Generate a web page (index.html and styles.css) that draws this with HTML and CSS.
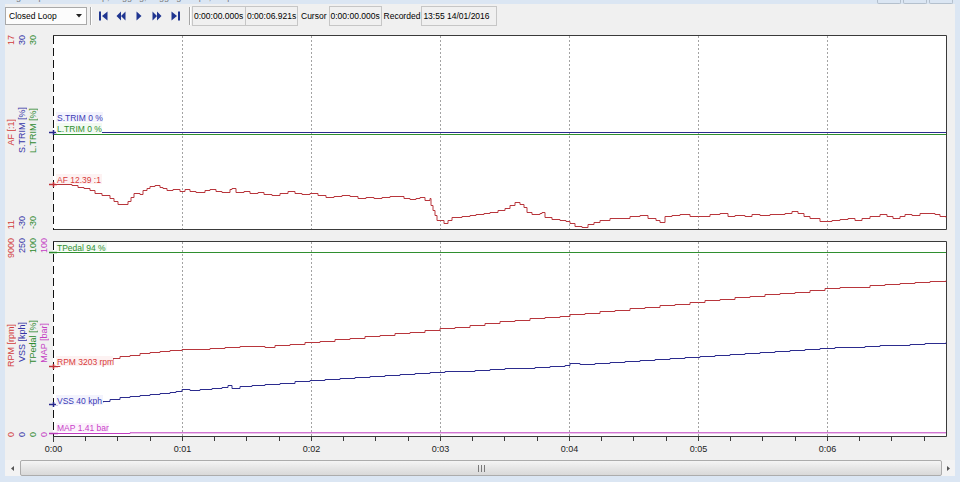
FILE: index.html
```html
<!DOCTYPE html>
<html>
<head>
<meta charset="utf-8">
<link rel="stylesheet" href="styles.css">
</head>
<body>
<div class="title">
  <span class="title-text">Log Graph - Closed Loop, Logging, Logging Graph, Help</span>
  <div class="winbtns"><span class="winbtn"></span><span class="winbtn"></span><span class="winbtn"></span></div>
</div>
<div class="app">
  <div class="toolbar">
    <div class="combo"><span>Closed Loop</span><svg class="combo-arrow" width="6" height="4" viewBox="0 0 6 4"><path d="M0 0H6L3 3.5Z" fill="#222"/></svg></div>
    <span class="sep"></span>
    <span class="tbtn"><svg width="9" height="10" viewBox="0 0 9 10"><rect x="0" y="0.5" width="2" height="9" fill="#1f3590"/><path d="M8.5 0.5V9.5L3 5Z" fill="#1f3590"/></svg></span>
    <span class="tbtn"><svg width="10" height="10" viewBox="0 0 10 10"><path d="M5 0.5V9.5L0.5 5Z M9.5 0.5V9.5L5 5Z" fill="#1f3590"/></svg></span>
    <span class="tbtn"><svg width="6" height="10" viewBox="0 0 6 10"><path d="M0.5 0.5V9.5L5.5 5Z" fill="#1f3590"/></svg></span>
    <span class="tbtn"><svg width="10" height="10" viewBox="0 0 10 10"><path d="M0.5 0.5V9.5L5 5Z M5 0.5V9.5L9.5 5Z" fill="#1f3590"/></svg></span>
    <span class="tbtn"><svg width="9" height="10" viewBox="0 0 9 10"><path d="M0.5 0.5V9.5L6 5Z" fill="#1f3590"/><rect x="7" y="0.5" width="2" height="9" fill="#1f3590"/></svg></span>
    <span class="sep sep2"></span>
    <span class="field f1">0:00:00.000s</span>
    <span class="field f2">0:00:06.921s</span>
    <span class="tlabel l1">Cursor</span>
    <span class="field f3">0:00:00.000s</span>
    <span class="tlabel l2">Recorded</span>
    <span class="field f4">13:55 14/01/2016</span>
  </div>

  <div class="chart chart1">
    <div class="axes">
      <div class="col red"><span>17</span><span>AF [:1]</span><span>11</span></div>
      <div class="col blue"><span>30</span><span>S.TRIM [%]</span><span>-30</span></div>
      <div class="col green"><span>30</span><span>L.TRIM [%]</span><span>-30</span></div>
    </div>
    <svg class="plot" viewBox="51 33 897 199" width="897" height="199">
      <rect x="53" y="35" width="893" height="195" fill="#fff"/>
      <g class="grid">
        <line x1="182.5" y1="36" x2="182.5" y2="229"/>
        <line x1="311.5" y1="36" x2="311.5" y2="229"/>
        <line x1="440.5" y1="36" x2="440.5" y2="229"/>
        <line x1="569.5" y1="36" x2="569.5" y2="229"/>
        <line x1="698.5" y1="36" x2="698.5" y2="229"/>
        <line x1="827.5" y1="36" x2="827.5" y2="229"/>
      </g>
      <path class="frame" d="M53 35.5H946.5V229.5H53"/>
      <line class="cursor" x1="53.5" y1="36" x2="53.5" y2="230"/>
      <line class="tr-blue" x1="53" y1="132.5" x2="946" y2="132.5"/>
      <line class="tr-green" x1="53" y1="134.5" x2="946" y2="134.5"/>
      <path class="tr-red" d="M53 184.5 H72 V185.5 H78 V187.5 H84 V188.5 H90 V190.5 H95 V193.5 H102 V195.5 H110 V198.5 H114 V201.5 H118 V204.5 H128 V201.5 H131 V197.5 H134 V193.5 H140 V194.5 H143 V190.5 H147 V188.5 H150 V186.5 H155 V185.5 H160 V187.5 H163 V188.5 H167 V190.5 H173 V189.5 H180 V191.5 H185 V189.5 H190 V191.5 H196 V192.5 H205 V190.5 H210 V189.5 H216 V191.5 H222 V192.5 H230 V189.5 H232 V188.5 H236 V192.5 H244 V191.5 H250 V193.5 H258 V192.5 H264 V194.5 H272 V195.5 H280 V193.5 H288 V191.5 H295 V193.5 H302 V194.5 H310 V193.5 H318 V195.5 H326 V197.5 H334 V196.5 H342 V195.5 H350 V196.5 H358 V198.5 H366 V197.5 H374 V198.5 H382 V197.5 H390 V196.5 H400 V196.5 H404 V198.5 H410 V199.5 H416 V198.5 H420 V197.5 H425 V200.5 H430 V198.5 H431 V205.5 H433 V210.5 H435 V215.5 H437 V220.5 H444 V223.5 H448 V220.5 H452 V217.5 H462 V216.5 H470 V215.5 H476 V214.5 H484 V213.5 H490 V212.5 H498 V210.5 H505 V208.5 H510 V205.5 H515 V202.5 H520 V204.5 H524 V207.5 H527 V212.5 H532 V214.5 H540 V213.5 H542 V212.5 H545 V217.5 H552 V219.5 H560 V220.5 H566 V221.5 H570 V223.5 H575 V226.5 H582 V227.5 H588 V224.5 H594 V222.5 H600 V220.5 H610 V218.5 H620 V218.5 H630 V216.5 H640 V215.5 H648 V218.5 H656 V220.5 H660 V222.5 H665 V216.5 H672 V215.5 H680 V214.5 H690 V216.5 H700 V216.5 H710 V214.5 H720 V213.5 H728 V216.5 H735 V215.5 H745 V216.5 H752 V214.5 H760 V215.5 H770 V214.5 H785 V213.5 H792 V211.5 H798 V213.5 H804 V216.5 H810 V218.5 H820 V221.5 H832 V220.5 H840 V219.5 H848 V218.5 H855 V220.5 H862 V218.5 H870 V216.5 H880 V214.5 H887 V216.5 H893 V218.5 H900 V216.5 H905 V214.5 H912 V215.5 H920 V213.5 H935 V214.5 H940 V216.5 H946 V217.5"/>
      <path class="mk-blue" d="M49 132.5H57 M53.5 130V135"/>
      <path class="mk-red" d="M49 184.5H57 M53.5 182V187"/>
      <rect class="bg-blue" x="56" y="112" width="47" height="10"/>
      <text class="t-blue" x="57" y="120.5">S.TRIM 0 %</text>
      <rect class="bg-green" x="56" y="123" width="46" height="10"/>
      <text class="t-green" x="57" y="131.5">L.TRIM 0 %</text>
      <rect class="bg-red" x="56" y="174" width="46" height="10"/>
      <text class="t-red" x="57" y="182.5">AF 12.39 :1</text>
    </svg>
  </div>

  <div class="chart chart2">
    <div class="axes">
      <div class="col red"><span>9000</span><span>RPM [rpm]</span><span>0</span></div>
      <div class="col blue"><span>250</span><span>VSS [kph]</span><span>0</span></div>
      <div class="col green"><span>100</span><span>TPedal [%]</span><span>0</span></div>
      <div class="col mag"><span>100</span><span>MAP [bar]</span><span>0</span></div>
    </div>
    <svg class="plot" viewBox="51 238 897 217" width="897" height="217">
      <rect x="53" y="241" width="893" height="195" fill="#fff"/>
      <g class="grid">
        <line x1="182.5" y1="242" x2="182.5" y2="436"/>
        <line x1="311.5" y1="242" x2="311.5" y2="436"/>
        <line x1="440.5" y1="242" x2="440.5" y2="436"/>
        <line x1="569.5" y1="242" x2="569.5" y2="436"/>
        <line x1="698.5" y1="242" x2="698.5" y2="436"/>
        <line x1="827.5" y1="242" x2="827.5" y2="436"/>
      </g>
      <path class="frame" d="M53 241.5H946.5V436.5H53"/>
      <path class="ticks" d="M53.5 437V442 M85.5 437V441 M117.5 437V441 M150.5 437V441 M182.5 437V441 M214.5 437V441 M246.5 437V441 M279.5 437V441 M311.5 437V441 M343.5 437V441 M375.5 437V441 M408.5 437V441 M440.5 437V441 M472.5 437V441 M504.5 437V441 M537.5 437V441 M569.5 437V441 M601.5 437V441 M633.5 437V441 M666.5 437V441 M698.5 437V441 M730.5 437V441 M762.5 437V441 M795.5 437V441 M827.5 437V441 M859.5 437V441 M891.5 437V441 M924.5 437V441"/>
      <line class="cursor" x1="53.5" y1="242" x2="53.5" y2="436"/>
      <line class="tr-green" x1="53" y1="252.5" x2="946" y2="252.5"/>
      <path class="tr-red" d="M53 366.5 H60 V365.5 H70 V364.5 H80 V362.5 H90 V361.5 H100 V360.5 H113 V358.5 H120 V356.5 H130 V355.5 H140 V353.5 H150 V352.5 H160 V351.5 H170 V350.5 H182 V349.5 H195 V349.5 H210 V348.5 H225 V347.5 H240 V346.5 H255 V346.5 H265 V347.5 H275 V345.5 H290 V344.5 H305 V342.5 H320 V341.5 H335 V339.5 H350 V338.5 H365 V336.5 H380 V335.5 H395 V333.5 H410 V332.5 H425 V330.5 H440 V328.5 H455 V327.5 H470 V325.5 H485 V323.5 H500 V321.5 H515 V320.5 H530 V318.5 H545 V317.5 H560 V316.5 H570 V314.5 H585 V313.5 H600 V311.5 H615 V310.5 H630 V308.5 H645 V307.5 H660 V305.5 H675 V304.5 H690 V302.5 H705 V300.5 H720 V299.5 H735 V297.5 H750 V296.5 H765 V294.5 H780 V293.5 H795 V292.5 H810 V290.5 H825 V288.5 H840 V287.5 H855 V287.5 H870 V285.5 H885 V284.5 H900 V283.5 H915 V282.5 H930 V281.5 H946 V280.5"/>
      <path class="tr-blue" d="M53 404.5 H70 V403.5 H85 V402.5 H103 V401.5 H110 V399.5 H120 V397.5 H130 V396.5 H140 V395.5 H150 V394.5 H160 V393.5 H170 V392.5 H176 V391.5 H182 V389.5 H190 V390.5 H200 V389.5 H212 V388.5 H222 V387.5 H228 V385.5 H232 V388.5 H240 V386.5 H252 V385.5 H265 V384.5 H280 V383.5 H295 V381.5 H310 V380.5 H325 V379.5 H340 V378.5 H355 V377.5 H370 V376.5 H385 V375.5 H400 V374.5 H415 V373.5 H430 V372.5 H445 V371.5 H460 V371.5 H475 V370.5 H490 V369.5 H505 V368.5 H520 V368.5 H535 V367.5 H550 V366.5 H565 V365.5 H570 V363.5 H580 V364.5 H595 V363.5 H610 V362.5 H625 V361.5 H640 V360.5 H655 V359.5 H670 V358.5 H685 V357.5 H700 V356.5 H715 V355.5 H730 V354.5 H745 V353.5 H760 V352.5 H775 V351.5 H790 V350.5 H805 V349.5 H820 V348.5 H835 V347.5 H850 V347.5 H865 V346.5 H880 V345.5 H895 V345.5 H910 V344.5 H925 V343.5 H946 V342.5"/>
      <path class="tr-mag" d="M53 433.5 H130 V432.8 H946"/>
      <path class="mk-green" d="M49 252.5H57"/>
      <path class="mk-red" d="M49 366.5H58 M53.5 364V369"/>
      <path class="mk-blue" d="M49 404.5H58 M53.5 402V407"/>
      <path class="mk-mag" d="M49 433.5H58"/>
      <rect class="bg-green" x="56" y="242" width="51" height="9"/>
      <text class="t-green" x="57" y="250.5">TPedal 94 %</text>
      <rect class="bg-red" x="56" y="356" width="57" height="10"/>
      <text class="t-red" x="57" y="364.5">RPM 3203 rpm</text>
      <rect class="bg-blue" x="56" y="395" width="47" height="10"/>
      <text class="t-blue" x="57" y="403.5">VSS 40 kph</text>
      <rect class="bg-mag" x="56" y="423" width="53" height="9"/>
      <text class="t-mag" x="57" y="431">MAP 1.41 bar</text>
      <g class="tlbl">
        <text x="53.5" y="451.5">0:00</text>
        <text x="182.5" y="451.5">0:01</text>
        <text x="311.5" y="451.5">0:02</text>
        <text x="440.5" y="451.5">0:03</text>
        <text x="569.5" y="451.5">0:04</text>
        <text x="698.5" y="451.5">0:05</text>
        <text x="827.5" y="451.5">0:06</text>
      </g>
    </svg>
  </div>

  <div class="hscroll">
    <span class="sarr"><svg width="3" height="5" viewBox="0 0 3 5"><path d="M3 0V5L0 2.5Z" fill="#555"/></svg></span>
    <div class="thumb"><svg width="7" height="7" viewBox="0 0 7 7"><path d="M0.5 0V7 M3.5 0V7 M6.5 0V7" stroke="#7a7a7a" stroke-width="1"/></svg></div>
    <span class="sarr right"><svg width="3" height="5" viewBox="0 0 3 5"><path d="M0 0V5L3 2.5Z" fill="#555"/></svg></span>
  </div>
</div>
</body>
</html>
```
FILE: styles.css
```css
* { box-sizing: border-box; }
html, body { margin: 0; padding: 0; }
body {
  width: 960px;
  height: 482px;
  overflow: hidden;
  background: #dbe6f3;
  font-family: "Liberation Sans", Arial, sans-serif;
  font-size: 8.5px;
  color: #000;
}
.title {
  height: 4px;
  overflow: hidden;
  display: flex;
  justify-content: space-between;
  padding: 0 7px 0 6px;
}
.title-text {
  margin-top: -8px;
  color: #777;
  font-size: 9px;
  white-space: nowrap;
}
.winbtns { display: flex; gap: 2px; }
.winbtn {
  width: 24px;
  height: 4px;
  border: 1px solid #b4c0cd;
  border-top: none;
  border-radius: 0 0 2px 2px;
}
.app {
  margin: 0 5px;
  height: 472px;
  background: #f0f0f0;
  display: flex;
  flex-direction: column;
}
.toolbar {
  height: 24px;
  flex: none;
  display: flex;
  align-items: center;
}
.combo {
  width: 82px;
  height: 18px;
  border: 1px solid #a9a9a9;
  background: #fcfcfc;
  display: flex;
  align-items: center;
  justify-content: space-between;
  padding: 0 4px 0 3px;
}
.sep {
  width: 2px;
  height: 18px;
  border-left: 1px solid #a6a6a6;
  border-right: 1px solid #ffffff;
  margin: 0 2px 0 3px;
}
.sep2 { margin: 0 1px 0 5px; }
.tbtn {
  width: 18px;
  height: 18px;
  display: flex;
  align-items: center;
  justify-content: center;
}
.field {
  height: 20px;
  border: 1px solid #c6c6c6;
  padding-left: 1px;
  display: flex;
  align-items: center;
  white-space: nowrap;
  overflow: hidden;
}
.f1 { width: 54px; }
.f2 { width: 53px; margin-left: -1px; }
.f3 { width: 53px; }
.f4 { width: 76px; }
.tlabel { white-space: nowrap; }
.l1 { margin: 0 2px 0 3px; }
.l2 { margin: 0 1px 0 2px; }

.chart { display: flex; flex: none; }
.chart1 { margin-top: 5px; height: 199px; }
.chart2 { margin-top: 6px; height: 217px; }
.axes {
  width: 46px;
  flex: none;
  padding-left: 1px;
  display: flex;
}
.chart1 .axes { margin-top: 2px; height: 194px; }
.chart2 .axes { height: 199px; }
.col {
  width: 11px;
  height: 100%;
  display: flex;
  flex-direction: column;
  justify-content: space-between;
  align-items: center;
}
.col span {
  writing-mode: vertical-rl;
  transform: rotate(180deg);
  line-height: 11px;
  font-size: 9px;
  white-space: nowrap;
}
.red { color: #d23c3c; }
.blue { color: #3535a8; }
.green { color: #2e8a2e; }
.mag { color: #c43ec4; }

.plot { display: block; flex: none; width: 897px; overflow: visible; }
.chart1 .plot { height: 199px; }
.chart2 .plot { height: 217px; }
.plot text { font-size: 8.5px; font-family: "Liberation Sans", Arial, sans-serif; }
.grid line { stroke: #a3a3a3; stroke-width: 1; stroke-dasharray: 2 2; }
.frame { fill: none; stroke: #3a3a3a; stroke-width: 1; }
.ticks { fill: none; stroke: #3a3a3a; stroke-width: 1; }
.cursor { stroke: #111; stroke-width: 1; stroke-dasharray: 8 4; }
.tr-red { fill: none; stroke: #b8363c; stroke-width: 1; }
.tr-blue { fill: none; stroke: #2c2c8e; stroke-width: 1; }
.tr-green { fill: none; stroke: #2f8f2f; stroke-width: 1; }
.tr-mag { fill: none; stroke: #c03cc0; stroke-width: 1; }
.mk-red { fill: none; stroke: #c02f35; stroke-width: 1.5; }
.mk-blue { fill: none; stroke: #26268c; stroke-width: 1.5; }
.mk-green { fill: none; stroke: #2a8a2a; stroke-width: 1.5; }
.mk-mag { fill: none; stroke: #b838b8; stroke-width: 1.5; }
.bg-red { fill: #fdf2f2; }
.bg-blue { fill: #f3f3fd; }
.bg-green { fill: #f2faf2; }
.bg-mag { fill: #fcf2fc; }
.t-red { fill: #d83a3a; }
.t-blue { fill: #3a3ab6; }
.t-green { fill: #2e8f2e; }
.t-mag { fill: #c93ec9; }
.tlbl text { fill: #222; text-anchor: middle; font-size: 9px; }

.hscroll {
  margin-top: 5px;
  height: 16px;
  flex: none;
  display: flex;
  align-items: stretch;
  background: #f3f3f3;
}
.sarr {
  width: 15px;
  flex: none;
  display: flex;
  align-items: center;
  justify-content: center;
}
.sarr.right { width: 13px; }
.thumb {
  flex: 1;
  border: 1px solid #acacac;
  border-radius: 2px;
  background: linear-gradient(#f5f5f5, #e6e6e6 50%, #d9d9d9);
  display: flex;
  align-items: center;
  justify-content: center;
}
```
